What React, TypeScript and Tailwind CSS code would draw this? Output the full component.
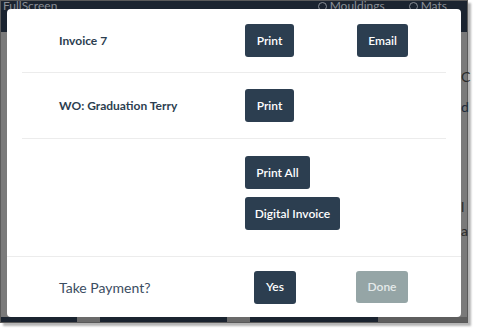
import React from "react";

const btn =
  "h-[33px] whitespace-nowrap rounded-[3px] bg-[#2c3e50] px-[10px] text-[12px] font-semibold text-white flex items-center justify-center";

export default function App() {
  return (
    <div className="relative h-[334px] w-[477px] overflow-hidden bg-white font-['Lato','Liberation_Sans',sans-serif]">
      {/* background screenshot frame */}
      <div className="relative h-[323px] w-[468px] border border-[#5a5a5a] bg-[#7a7a7a] shadow-[3px_3px_2px_#b5b5b5]">
        <div className="flex h-[31px] items-start bg-[#1b2430] text-[12px] leading-[12px] text-[#8a8f96]">
          <span className="ml-[2px] mt-[-1px]">FullScreen</span>
          <span className="ml-auto mt-[-1px] flex items-center gap-[3px]">
            <span className="inline-block h-[9px] w-[9px] rounded-full border-[1.5px] border-[#8a8f96]" />
            Mouldings
          </span>
          <span className="ml-[24px] mr-[20px] mt-[-1px] flex items-center gap-[3px]">
            <span className="inline-block h-[9px] w-[9px] rounded-full border-[1.5px] border-[#8a8f96]" />
            Mats
          </span>
        </div>
        {/* right strip letters */}
        <div className="absolute right-0 top-[66px] flex w-[6px] flex-col text-[14px] leading-[20px] text-[#2a2a2a]">
          <span className="h-[30px]">C</span>
          <span className="h-[100px] text-[#1e2a3a]">d</span>
          <span className="h-[24px]">l</span>
          <span>a</span>
        </div>
        {/* bottom strip */}
        <div className="absolute bottom-0 left-0 flex h-[5px] w-full">
          <div className="w-[76px] bg-[#1b2430]" />
          <div className="w-[23px] bg-[#6a6a6a]" />
          <div className="w-[127px] bg-[#1b2430]" />
          <div className="w-[23px] bg-[#6a6a6a]" />
          <div className="w-[128px] bg-[#1b2430]" />
          <div className="flex-1 bg-[#5e5e5e]" />
        </div>
      </div>

      {/* modal */}
      <div className="absolute left-[7px] top-[9px] flex h-[308px] w-[454px] flex-col rounded-[4px] bg-white text-[#2c3e50]">
        <div className="mx-[15px] flex h-[64px] items-center border-b border-[#ececec] pl-[37px]">
          <div className="w-[186px] text-[12px] font-bold">Invoice 7</div>
          <div className="w-[112px]">
            <button className={btn + " w-[49px]"}>Print</button>
          </div>
          <button className={btn + " w-[51px]"}>Email</button>
        </div>
        <div className="mx-[15px] flex h-[66px] items-center border-b border-[#ececec] pl-[37px]">
          <div className="w-[186px] text-[12px] font-bold">WO: Graduation Terry</div>
          <button className={btn + " w-[49px]"}>Print</button>
        </div>
        <div className="mx-[15px] flex h-[117px] flex-col items-start gap-[8px] pl-[223px] pt-[17px]">
          <button className={btn + " h-[32px] w-[65px]"}>Print All</button>
          <button className={btn + " w-[95px]"}>Digital Invoice</button>
        </div>
        <div className="flex flex-1 items-center border-t border-[#ececec] pl-[52px]">
          <div className="w-[195px] text-[14px] text-[#3b4d61]">Take Payment?</div>
          <div className="w-[102px]">
            <button className={btn + " h-[32px] w-[42px]"}>Yes</button>
          </div>
          <button className="flex h-[32px] w-[52px] items-center justify-center rounded-[3px] bg-[#95a5a6] text-[12px] font-semibold text-[#e4eaea]">
            Done
          </button>
        </div>
      </div>
    </div>
  );
}
